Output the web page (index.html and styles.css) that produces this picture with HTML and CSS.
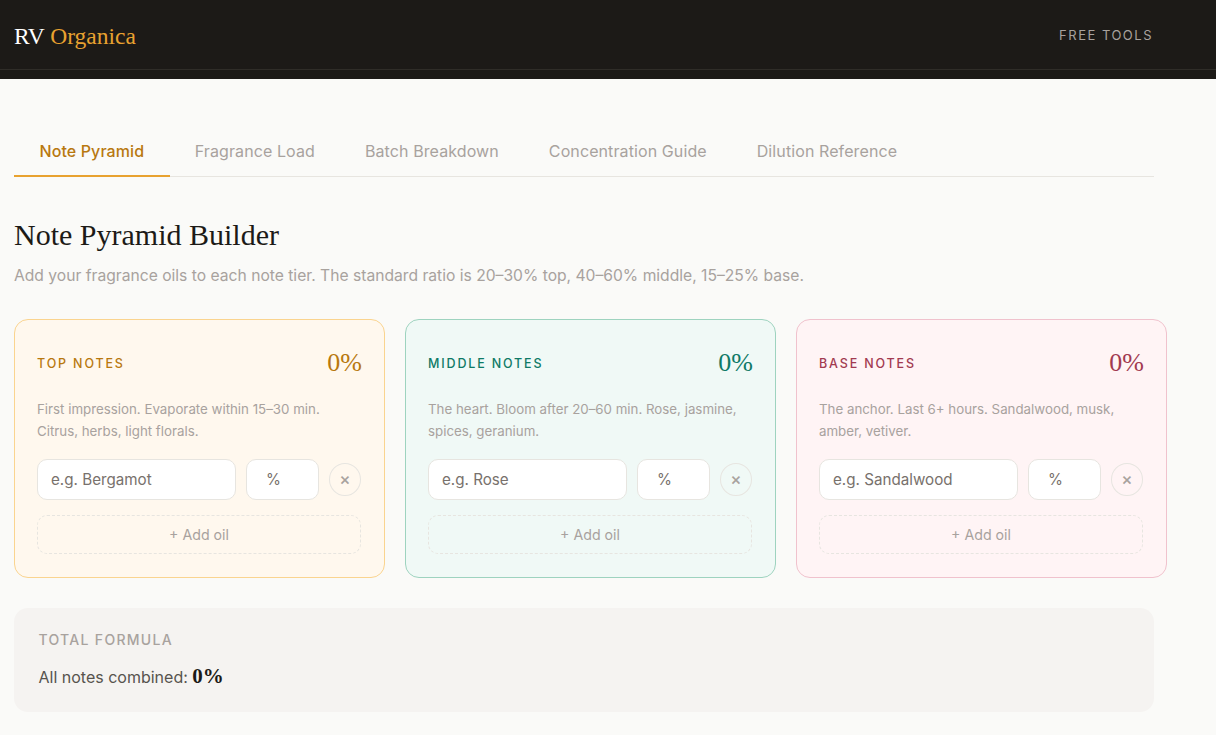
FILE: index.html
```html
<!DOCTYPE html>
<html>
<head>
    <meta charset="UTF-8">
    <meta name="viewport" content="width=device-width, initial-scale=1.0">
    <title>Note Pyramid Builder</title>
    <link rel="stylesheet" href="styles.css">
</head>
<body>
    <header class="site-header">
        <div class="nav">
            <a class="logo">RV <span>Organica</span></a>
            <a class="nav-link">FREE TOOLS</a>
        </div>
    </header>

    <main class="page">
        <nav class="tabs">
            <button class="tab active">Note Pyramid</button>
            <button class="tab">Fragrance Load</button>
            <button class="tab">Batch Breakdown</button>
            <button class="tab">Concentration Guide</button>
            <button class="tab">Dilution Reference</button>
        </nav>

        <h1>Note Pyramid Builder</h1>
        <p class="intro">Add your fragrance oils to each note tier. The standard ratio is 20–30% top, 40–60% middle, 15–25% base.</p>

        <div class="tiers">
            <section class="tier top">
                <div class="tier-head">
                    <h2>TOP NOTES</h2>
                    <span class="tier-pct">0%</span>
                </div>
                <p class="tier-desc">First impression. Evaporate within 15–30 min. Citrus, herbs, light florals.</p>
                <div class="oil-row">
                    <input class="oil-name" type="text" placeholder="e.g. Bergamot">
                    <input class="oil-pct" type="text" placeholder="%">
                    <button class="remove">×</button>
                </div>
                <button class="add-oil">+ Add oil</button>
            </section>

            <section class="tier middle">
                <div class="tier-head">
                    <h2>MIDDLE NOTES</h2>
                    <span class="tier-pct">0%</span>
                </div>
                <p class="tier-desc">The heart. Bloom after 20–60 min. Rose, jasmine, spices, geranium.</p>
                <div class="oil-row">
                    <input class="oil-name" type="text" placeholder="e.g. Rose">
                    <input class="oil-pct" type="text" placeholder="%">
                    <button class="remove">×</button>
                </div>
                <button class="add-oil">+ Add oil</button>
            </section>

            <section class="tier base">
                <div class="tier-head">
                    <h2>BASE NOTES</h2>
                    <span class="tier-pct">0%</span>
                </div>
                <p class="tier-desc">The anchor. Last 6+ hours. Sandalwood, musk, amber, vetiver.</p>
                <div class="oil-row">
                    <input class="oil-name" type="text" placeholder="e.g. Sandalwood">
                    <input class="oil-pct" type="text" placeholder="%">
                    <button class="remove">×</button>
                </div>
                <button class="add-oil">+ Add oil</button>
            </section>
        </div>

        <section class="total">
            <h3>TOTAL FORMULA</h3>
            <p>All notes combined: <strong>0%</strong></p>
        </section>
    </main>
</body>
</html>
```

FILE: styles.css
```css
* {
    box-sizing: border-box;
}

body {
    margin: 0;
    background: #fafaf8;
    color: #1c1a17;
    font-family: "Inter", "Open Sans", Arial, sans-serif;
}

.site-header {
    background: #1c1a17;
    height: 79px;
}

.nav {
    display: flex;
    justify-content: space-between;
    align-items: center;
    height: 70px;
    padding: 3px 63px 0 14px;
    border-bottom: 1px solid #2f2d28;
}

.logo {
    color: #ffffff;
    font-family: "Liberation Serif", serif;
    font-size: 23.5px;
}

.logo span {
    color: #e8a230;
}

.nav-link {
    margin-bottom: 2px;
    color: #a8a29e;
    font-family: "Inter", sans-serif;
    font-size: 13px;
    letter-spacing: 1.5px;
}

.page {
    width: 1140px;
    margin-left: 14px;
    padding-top: 48px;
}

.tabs {
    display: flex;
    height: 50px;
    border-bottom: 1px solid #e7e5e0;
}

.tab {
    height: 50px;
    padding: 0 25px;
    border: none;
    border-bottom: 2px solid transparent;
    background: none;
    color: #a8a29e;
    font-family: "Inter", sans-serif;
    font-size: 16px;
    letter-spacing: 0.1px;
}

.tab.active {
    padding: 0 25.5px;
    color: #b8780f;
    font-weight: 500;
    border-bottom-color: #e8a230;
}

h1 {
    margin: 40px 0 0;
    font-family: "Liberation Serif", serif;
    font-size: 30px;
    font-weight: 400;
    line-height: 36px;
}

.intro {
    margin: 10px 0 0;
    color: #a8a29e;
    font-size: 15.65px;
    line-height: 25px;
}

.tiers {
    display: grid;
    grid-template-columns: repeat(3, 371px);
    gap: 20px;
    margin-top: 31px;
}

.tier {
    height: 259px;
    padding: 24px 23px 24px 22px;
    border: 1px solid;
    border-radius: 14px;
}

.tier.top {
    background: #fff8ee;
    border-color: #fad48f;
}

.tier.middle {
    background: #f0f9f6;
    border-color: #9ed3bf;
}

.tier.base {
    background: #fff4f5;
    border-color: #f0c2cd;
}

.tier-head {
    display: flex;
    justify-content: space-between;
    align-items: center;
    height: 38px;
}

.tier-head h2 {
    margin: 0;
    font-family: "Inter", sans-serif;
    font-size: 12.5px;
    font-weight: 500;
    letter-spacing: 1.85px;
}

.tier-pct {
    margin-right: -1px;
    font-family: "Liberation Serif", serif;
    font-size: 26px;
}

.top h2, .top .tier-pct {
    color: #b8780f;
}

.middle h2, .middle .tier-pct {
    color: #0f7a66;
}

.base h2, .base .tier-pct {
    color: #a23a50;
}

.tier-desc {
    margin: 16px 0 0;
    color: #a8a29e;
    font-size: 13.3px;
    line-height: 22px;
    height: 44px;
}

.oil-row {
    display: flex;
    align-items: center;
    gap: 10px;
    margin-top: 17px;
}

.oil-row input {
    height: 41px;
    border: 1px solid #e7e5e0;
    border-radius: 10px;
    background: #ffffff;
    padding: 0 13px;
    font-family: "Inter", sans-serif;
    font-size: 15.2px;
}

.oil-row input::placeholder {
    color: #78716c;
}

.oil-name {
    width: 199px;
}

.oil-pct {
    width: 73px;
    padding-left: 19px !important;
}

.remove {
    width: 32px;
    height: 33px;
    padding: 0;
    border: 1px solid #e7e5e0;
    border-radius: 50%;
    background: transparent;
    color: #a8a29e;
    font-family: "Inter", sans-serif;
    font-size: 17px;
    font-weight: 500;
    line-height: 1;
}

.add-oil {
    display: block;
    width: 100%;
    height: 39px;
    margin-top: 15px;
    border: 1px dashed #e7e5e0;
    border-radius: 10px;
    background: transparent;
    color: #a8a29e;
    font-family: "Inter", sans-serif;
    font-size: 14.2px;
}

.total {
    height: 104px;
    margin-top: 30px;
    padding: 22px 24.5px;
    background: #f5f3f1;
    border-radius: 14px;
}

.total h3 {
    margin: 0;
    color: #a8a29e;
    font-size: 14px;
    font-weight: 500;
    letter-spacing: 1.3px;
    line-height: 20px;
}

.total p {
    margin: 13px 0 0;
    color: #57534e;
    font-size: 16px;
    line-height: 26px;
}

.total strong {
    color: #1c1a17;
    font-family: "Liberation Serif", serif;
    font-size: 21px;
}
```
